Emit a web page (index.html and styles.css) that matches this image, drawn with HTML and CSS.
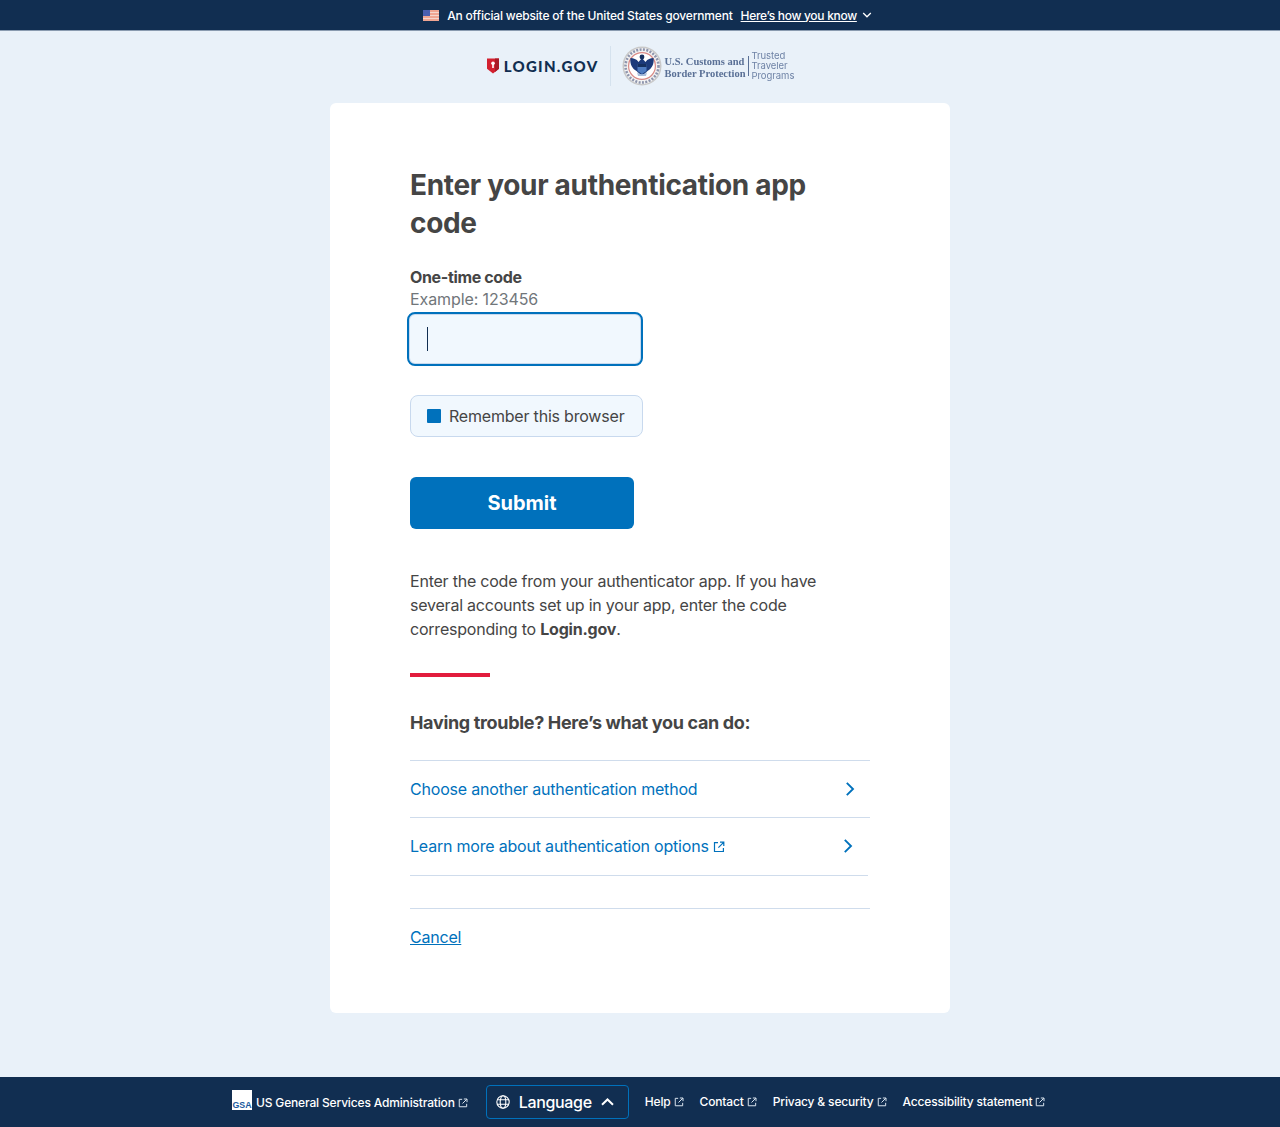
FILE: index.html
```html
<!DOCTYPE html>
<html lang="en">
<head>
<meta charset="utf-8">
<title>Enter your authentication app code</title>
<link rel="stylesheet" href="styles.css">
</head>
<body>
<svg class="defs" width="0" height="0" aria-hidden="true">
  <symbol id="ext" viewBox="0 0 12 12"><path d="M5 1.600H1.500v8.900h8.900V7M7 1.200h3.800V5M10.600 1.400 5.400 6.600" fill="none" stroke="currentColor" stroke-width="1.200"/></symbol>
  <symbol id="chev" viewBox="0 0 10 16"><path d="M1.800 1.800 8 8l-6.200 6.200" fill="none" stroke="currentColor" stroke-width="1.900"/></symbol>
</svg>
<header class="banner">
  <svg class="flag" width="16" height="11" viewBox="0 0 16 11"><rect width="16" height="11" fill="#f0a592"/><rect y="2" width="16" height="1" fill="#f6d5cc"/><rect y="5" width="16" height="1" fill="#f6d5cc"/><rect y="8" width="16" height="1" fill="#f6d5cc"/><rect width="7" height="6" fill="#4a5fb0"/></svg>
  <span class="banner-text">An official website of the United States government</span>
  <a class="banner-link">Here’s how you know</a>
  <svg class="banner-chev" width="10" height="6" viewBox="0 0 10 6"><path d="M1.200 1 5 4.800 8.800 1" fill="none" stroke="#fff" stroke-width="1.300"/></svg>
</header>
<div class="logos">
  <div class="login-logo">
    <svg width="12" height="16" viewBox="0 0 12 16"><path d="M0 .5h12v10.200L6 15.600 0 10.700z" fill="#d3202f"/><path d="M8 .5h4v10.200L8 14z" fill="#a81a26"/><circle cx="6" cy="5.200" r="1.800" fill="#fff"/><rect x="5.200" y="5.500" width="1.600" height="4.500" fill="#fff"/></svg>
    <span class="login-word">LOGIN.GOV</span>
  </div>
  <div class="logo-rule"></div>
  <div class="cbp-logo">
    <svg class="seal" width="40" height="40" viewBox="0 0 40 40">
      <circle cx="20" cy="20" r="19.500" fill="#c9c9c9"/>
      <circle cx="20" cy="20" r="18" fill="#f3f3f3"/>
      <circle cx="20" cy="20" r="16.500" fill="none" stroke="#8e95ad" stroke-width="2.600" stroke-dasharray="2 1.400"/>
      <circle cx="20" cy="20" r="13.400" fill="#fff" stroke="#d98a86" stroke-width="1.200"/>
      <path d="M8.500 12c3 0 6 1 8 4l3.500-4 3.500 4c2-3 5-4 8-4 1 6-2 11-6 13l-5.500 5-5.500-5C10.500 23 7.500 18 8.500 12z" fill="#1c3a7a"/>
      <path d="M15.500 18h9v7l-4.500 3-4.500-3z" fill="#4f7cc0"/>
      <path d="M15.500 18h9v3h-9z" fill="#16305f"/>
      <circle cx="20" cy="11" r="2.400" fill="#16305f"/>
      <path d="M15 26c3 3 7 3 10 0l-1 4h-8z" fill="#a9bedc"/>
    </svg>
    <div class="cbp-name"><span>U.S. Customs and</span><span>Border Protection</span></div>
    <div class="cbp-rule"></div>
    <div class="cbp-prog"><span>Trusted</span><span>Traveler</span><span>Programs</span></div>
  </div>
</div>
<main class="card">
  <h1>Enter your authentication app code</h1>
  <label class="field-label" for="code">One-time code</label>
  <div class="hint">Example: 123456</div>
  <div class="code-input" id="code"><span class="caret"></span></div>
  <div class="remember"><span class="check"></span><span>Remember this browser</span></div>
  <button class="submit" type="button">Submit</button>
  <p class="instructions">Enter the code from your authenticator app. If you have several accounts set up in your app, enter the code corresponding to <strong>Login.gov</strong>.</p>
  <div class="accent"></div>
  <h2>Having trouble? Here’s what you can do:</h2>
  <ul class="options">
    <li class="option"><a>Choose another authentication method</a><svg class="chev" width="10" height="16"><use href="#chev"/></svg></li>
    <li class="option option-second"><a>Learn more about authentication options<svg class="ext-link" width="12" height="12"><use href="#ext"/></svg></a><svg class="chev" width="10" height="16"><use href="#chev"/></svg></li>
  </ul>
  <div class="cancel-row"><a class="cancel">Cancel</a></div>
</main>
<footer class="footer">
  <svg class="gsa" width="20" height="20" viewBox="0 0 20 20"><rect width="20" height="20" fill="#fff"/><text x="10" y="17.500" text-anchor="middle" class="gsa-text">GSA</text></svg>
  <a class="foot-link gsa-link">US General Services Administration<svg class="ext" width="10" height="10"><use href="#ext"/></svg></a>
  <div class="lang">
    <svg width="14" height="14" viewBox="0 0 14 14" fill="none" stroke="#fff" stroke-width="1.100"><circle cx="7" cy="7" r="6.200"/><ellipse cx="7" cy="7" rx="2.800" ry="6.200"/><path d="M1 4.800h12M1 9.200h12"/></svg>
    <span>Language</span>
    <svg width="13" height="8" viewBox="0 0 13 8"><path d="M1 6.800 6.500 1.500 12 6.800" fill="none" stroke="#fff" stroke-width="2"/></svg>
  </div>
  <nav class="foot-nav">
    <a class="foot-link">Help<svg class="ext" width="10" height="10"><use href="#ext"/></svg></a>
    <a class="foot-link">Contact<svg class="ext" width="10" height="10"><use href="#ext"/></svg></a>
    <a class="foot-link">Privacy &amp; security<svg class="ext" width="10" height="10"><use href="#ext"/></svg></a>
    <a class="foot-link">Accessibility statement<svg class="ext" width="10" height="10"><use href="#ext"/></svg></a>
  </nav>
</footer>
</body>
</html>
```
FILE: styles.css
```css
* { box-sizing: border-box; }
html, body { margin: 0; padding: 0; }
body {
  min-height: 1127px;
  display: flex;
  flex-direction: column;
  background: #e9f1f9;
  color: #454545;
  font-family: "Inter", "Liberation Sans", sans-serif;
  font-size: 16px;
  letter-spacing: -.2px;
}
.defs { position: absolute; }
.banner {
  height: 31px;
  background: #112e51;
  border-bottom: 1px solid #8a9bb0;
  color: #fff;
  font-size: 12px;
  font-weight: 500;
  display: flex;
  align-items: center;
  justify-content: center;
  padding-left: 15px;
}
.flag { margin-right: 8px; }
.banner-text { margin-right: 8px; letter-spacing: -.18px; }
.banner-link { text-decoration: underline; letter-spacing: -.3px; }
.banner-chev { margin-left: 5px; }
.logos {
  height: 72px;
  display: flex;
  align-items: center;
  justify-content: center;
  padding: 0 0 2px 1px;
}
.login-logo { display: flex; align-items: center; gap: 5px; }
.login-word {
  font-family: "Lato", sans-serif;
  font-weight: 900;
  font-size: 15px;
  letter-spacing: 1.300px;
  color: #112e51;
}
.logo-rule { width: 1px; height: 40px; background: #d5e2ee; margin: 0 11px; }
.cbp-logo { display: flex; align-items: center; filter: blur(.35px); }
.seal { margin-right: 3px; }
.cbp-name {
  display: flex;
  flex-direction: column;
  padding-top: 4px;
  font-family: "Liberation Serif", serif;
  font-weight: 700;
  font-size: 10.500px;
  line-height: 12px;
  letter-spacing: 0;
  color: #5a7096;
  white-space: nowrap;
}
.cbp-rule { width: 1px; height: 20px; background: #5a7096; margin: 0 2px 0 3px; }
.cbp-prog {
  display: flex;
  flex-direction: column;
  font-size: 9.500px;
  line-height: 10px;
  letter-spacing: -.05px;
  color: #6f83a6;
}
.card {
  width: 620px;
  height: 910px;
  margin: 0 auto;
  padding: 63px 80px 0;
  background: #fff;
  border-radius: 6px;
}
h1 {
  margin: 0 0 24px;
  font-size: 28px;
  line-height: 38px;
  font-weight: 700;
  letter-spacing: -.32px;
}
.field-label { display: block; font-weight: 700; font-size: 16px; line-height: 22px; letter-spacing: -.35px; }
.hint { color: #71767a; font-size: 16px; line-height: 22px; letter-spacing: -.1px; }
.code-input {
  width: 232px;
  height: 50px;
  margin: 4px 0 31px -1px;
  padding: 12px 17px;
  background: #f1f8fe;
  border: 1px solid #c8d9ee;
  border-radius: 6px;
  outline: 2px solid #0071bc;
  outline-offset: 0;
}
.caret { display: block; width: 1px; height: 24px; background: #112e51; }
.remember {
  width: 233px;
  height: 42px;
  display: flex;
  align-items: center;
  gap: 8px;
  padding-left: 16px;
  background: #f1f8fe;
  border: 1px solid #c8d9ee;
  border-radius: 8px;
  font-size: 16px;
}
.check { width: 14px; height: 14px; background: #0071bc; border-radius: 1px; }
.submit {
  display: block;
  width: 224px;
  height: 52px;
  margin: 40px 0;
  padding: 0;
  border: 0;
  border-radius: 6px;
  background: #0071bc;
  color: #fff;
  font: 700 20px "Inter", sans-serif;
}
.instructions { margin: 0 0 32px; font-size: 16px; line-height: 24px; letter-spacing: -.22px; }
.accent { width: 80px; height: 4px; background: #e21c3d; margin-bottom: 33px; }
h2 { margin: 0 0 24px; font-size: 18px; line-height: 26px; font-weight: 700; letter-spacing: -.33px; }
.options { list-style: none; margin: 0; padding: 0; border-top: 1px solid #cfdcec; }
.option {
  height: 57px;
  display: flex;
  align-items: center;
  justify-content: space-between;
  padding-right: 15px;
  border-bottom: 1px solid #cfdcec;
  color: #0071bc;
}
.option-second { width: 458px; height: 58px; padding-bottom: 2px; }
.ext-link { margin-left: 4px; vertical-align: -1px; }
.cancel-row { margin-top: 32px; padding-top: 16px; border-top: 1px solid #cfdcec; }
.cancel { color: #0071bc; text-decoration: underline; line-height: 24px; }
.footer {
  height: 50px;
  margin-top: auto;
  padding-left: 232px;
  background: #112e51;
  color: #fff;
  display: flex;
  align-items: center;
}
.gsa { margin: 0 4px 4px 0; }
.gsa-text { font: 700 8.800px "Liberation Sans", sans-serif; fill: #1a5a9e; letter-spacing: 0; }
.foot-link { font-size: 12px; font-weight: 500; white-space: nowrap; letter-spacing: -.16px; }
.gsa-link { margin-top: 1px; }
.ext { margin-left: 3px; vertical-align: -1px; color: #d9e3ee; }
.lang {
  width: 143px;
  height: 34px;
  margin: 0 16px 0 18px;
  display: flex;
  align-items: center;
  padding-left: 9px;
  border: 1px solid #0071bc;
  border-radius: 4px;
  font-size: 16px;
  font-weight: 500;
  letter-spacing: -.35px;
}
.lang span { margin: 0 9px; }
.foot-nav { display: flex; gap: 16px; margin-top: -1px; }
```
